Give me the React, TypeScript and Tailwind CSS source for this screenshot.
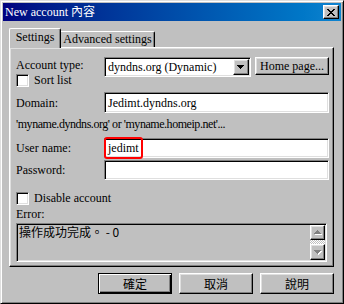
const serif = "font-[family-name:'Liberation_Serif','Noto_Sans_CJK_TC',serif]";
const cjk = "font-[family-name:'Noto_Sans_CJK_TC',sans-serif]";

// win98 style bevels
const raised =
  "border border-t-white border-l-white border-r-black border-b-black shadow-[inset_-1px_-1px_#808080,inset_1px_1px_#dfdfdf]";
const sunken =
  "border border-t-[#808080] border-l-[#808080] border-r-white border-b-white shadow-[inset_1px_1px_#000,inset_-1px_-1px_#dfdfdf]";

function XGlyph() {
  return (
    <svg width="8" height="7" viewBox="0 0 8 7" shapeRendering="crispEdges">
      <path
        fill="#000"
        d="M0 0h2v1H0z M6 0h2v1H6z M1 1h2v1H1z M5 1h2v1H5z M2 2h4v1H2z M3 3h2v1H3z M2 4h4v1H2z M1 5h2v1H1z M5 5h2v1H5z M0 6h2v1H0z M6 6h2v1H6z"
      />
    </svg>
  );
}

function Arrow({ up, disabled }: { up?: boolean; disabled?: boolean }) {
  const d = up
    ? "M3 0h1v1H3z M2 1h3v1H2z M1 2h5v1H1z M0 3h7v1H0z"
    : "M0 0h7v1H0z M1 1h5v1H1z M2 2h3v1H2z M3 3h1v1H3z";
  return (
    <svg width="8" height="5" viewBox="0 0 8 5" shapeRendering="crispEdges">
      {disabled && <path fill="#fff" d={d} transform="translate(1 1)" />}
      <path fill={disabled ? "#808080" : "#000"} d={d} />
    </svg>
  );
}

function Checkbox() {
  return <div className={`w-[13px] h-[13px] bg-white ${sunken}`} />;
}

function Field({ label, value, className = "", highlight }: { label: string; value?: string; className?: string; highlight?: boolean }) {
  return (
    <div className={`flex items-center ${className}`}>
      <div className="w-[88px] leading-[14px]">{label}</div>
      <div className={`relative flex-1 h-full bg-white ${sunken} pl-[3px] flex items-center leading-[14px]`}>
        {value}
        {highlight && (
          <div className="absolute left-[-1px] top-[-2px] w-[39px] h-[22px] border-2 border-[#ff0000] rounded-[3px]" />
        )}
      </div>
    </div>
  );
}

function DlgButton({ children, isDefault }: { children: string; isDefault?: boolean }) {
  const bevel = isDefault
    ? "border border-black shadow-[inset_1px_1px_#fff,inset_-1px_-1px_#000,inset_-2px_-2px_#808080]"
    : raised;
  return (
    <button className={`w-[74px] h-[21px] bg-[#c0c0c0] ${bevel} ${cjk} text-[12px] leading-[14px]`}>
      {children}
    </button>
  );
}

export default function App() {
  return (
    <div
      className={`w-[344px] h-[304px] bg-[#c0c0c0] border border-t-[#dfdfdf] border-l-[#dfdfdf] border-r-black border-b-black shadow-[inset_1px_1px_#fff,inset_-1px_-1px_#808080] p-[2px] flex flex-col text-[12px] text-black ${serif}`}
    >
      <div className="h-[18px] flex items-center justify-between px-[2px] bg-linear-to-r from-[#000080] to-[#1084d0]">
        <span className="text-white leading-[14px] whitespace-nowrap">New account 內容</span>
        <div className={`w-[16px] h-[14px] bg-[#c0c0c0] ${raised} flex items-center justify-center`}>
          <XGlyph />
        </div>
      </div>

      <div className="flex-1 flex flex-col pt-[7px] pl-[6px] pr-[7px]">
        {/* tabs */}
        <div className="flex items-end h-[20px]">
          <div className="relative z-10 h-[20px] w-[52px] bg-[#c0c0c0] border-t border-l border-r border-t-white border-l-white border-r-black rounded-t-[2px] shadow-[inset_-1px_0_#808080] text-center leading-[16px]">
            Settings
          </div>
          <div className="h-[17px] w-[94px] border-t border-r border-t-white border-r-black rounded-tr-[2px] shadow-[inset_-1px_0_#808080] text-center leading-[14px] whitespace-nowrap">
            Advanced settings
          </div>
        </div>

        {/* tab page */}
        <div className={`-mt-px h-[220px] ${raised} pt-[9px] pl-[6px] pr-[4px] flex flex-col`}>
          <div className="flex">
            <div className="w-[88px] flex flex-col">
              <div className="h-[16px] leading-[16px]">Account type:</div>
              <div className="mt-[1px] h-[13px] flex items-center gap-[5px]">
                <Checkbox />
                <span className="leading-[13px]">Sort list</span>
              </div>
            </div>
            <div className={`w-[147px] h-[20px] bg-white ${sunken} p-[1px] flex items-center`}>
              <span className="flex-1 pl-[2px] leading-[14px] whitespace-nowrap">dyndns.org (Dynamic)</span>
              <div className={`w-[16px] h-[16px] bg-[#c0c0c0] ${raised} flex items-center justify-center`}>
                <Arrow />
              </div>
            </div>
            <button className={`ml-[4px] w-[74px] h-[18px] bg-[#c0c0c0] ${raised} leading-[14px] whitespace-nowrap`}>
              Home page...
            </button>
          </div>

          <Field label="Domain:" value="Jedimt.dyndns.org" className="mt-[5px] h-[21px]" />

          <div className="mt-[4px] h-[14px] leading-[14px] whitespace-nowrap tracking-[-0.45px]">
            'myname.dyndns.org' or 'myname.homeip.net'...
          </div>

          <Field label="User name:" value="jedimt" className="mt-[7px] h-[20px]" highlight />
          <Field label="Password:" className="mt-[2px] h-[20px]" />

          <div className="mt-[12px] h-[13px] flex items-center gap-[5px]">
            <Checkbox />
            <span className="leading-[13px]">Disable account</span>
          </div>

          <div className="mt-[2px] h-[14px] leading-[14px]">Error:</div>

          <div className={`mt-[2px] w-[311px] h-[39px] ${sunken} p-[1px] flex`}>
            <div className={`flex-1 pl-[1px] leading-[14px] whitespace-nowrap ${cjk}`}>操作成功完成。 - 0</div>
            <div className="w-[15px] flex flex-col">
              <div className={`h-[15px] ${raised} flex items-center justify-center`}>
                <Arrow up disabled />
              </div>
              <div className="h-[4px] bg-[image:repeating-conic-gradient(#fff_0%_25%,#c0c0c0_0%_50%)] bg-[length:2px_2px]" />
              <div className={`h-[16px] ${raised} flex items-center justify-center`}>
                <Arrow disabled />
              </div>
            </div>
          </div>
        </div>

        <div className="mt-[6px] flex justify-end gap-[7px]">
          <DlgButton isDefault>確定</DlgButton>
          <DlgButton>取消</DlgButton>
          <DlgButton>說明</DlgButton>
        </div>
      </div>
    </div>
  );
}
